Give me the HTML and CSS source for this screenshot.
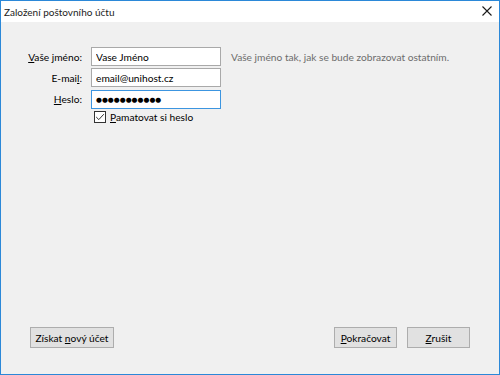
FILE: index.html
```html
<!DOCTYPE html>
<html lang="cs">
<head>
<meta charset="utf-8">
<link rel="stylesheet" href="styles.css">
</head>
<body>
<div class="window">
  <div class="titlebar">
    <span class="title">Založení poštovního účtu</span>
    <svg class="close" width="10" height="10" viewBox="0 0 10 10"><path d="M0.5 0.5 L9.5 9.5 M9.5 0.5 L0.5 9.5" stroke="#1a1a1a" stroke-width="1.1" fill="none"/></svg>
  </div>
  <div class="content">
    <div class="form">
      <label class="lbl"><u>V</u>aše jméno:</label>
      <input class="field" type="text" value="Vase Jméno">
      <span class="hint">Vaše jméno tak, jak se bude zobrazovat ostatním.</span>
      <label class="lbl">E-mai<u>l</u>:</label>
      <input class="field" type="text" value="email@unihost.cz">
      <span></span>
      <label class="lbl"><u>H</u>eslo:</label>
      <div class="field focus"><span class="dots">●●●●●●●●●●●</span></div>
      <span></span>
      <span></span>
      <div class="check">
        <svg class="box" width="12" height="12" viewBox="0 0 12 12"><rect x="0.5" y="0.5" width="11" height="11" fill="#fff" stroke="#333"/><path d="M2.2 6 L4.8 8.6 L9.8 3.2" stroke="#333" stroke-width="1" fill="none"/></svg>
        <span><u>P</u>amatovat si heslo</span>
      </div>
      <span></span>
    </div>
    <div class="buttons">
      <button class="btn new">Získat <u>n</u>ový účet</button>
      <div class="right">
        <button class="btn wide"><u>P</u>okračovat</button>
        <button class="btn wide"><u>Z</u>rušit</button>
      </div>
    </div>
  </div>
</div>
</body>
</html>
```
FILE: styles.css
```css
* { box-sizing: border-box; }
html, body { margin: 0; padding: 0; }
body {
  width: 500px;
  height: 375px;
  font-family: Lato, "Noto Sans", sans-serif;
  font-size: 10.2px;
  color: #000;
}
.window {
  width: 500px;
  height: 375px;
  border: 1px solid #2b88d8;
  display: flex;
  flex-direction: column;
  background: #f0f0f0;
}
.titlebar {
  height: 21px;
  background: #fff;
  display: flex;
  align-items: center;
  justify-content: space-between;
  padding: 0 7px 0 3px;
}
.title {
  font-size: 10px;
  color: #222;
}
.close { display: block; margin-top: -1px; }
.content {
  flex: 1;
  display: flex;
  flex-direction: column;
  justify-content: space-between;
  padding: 25px 0 26px 29px;
}
.form {
  display: grid;
  grid-template-columns: 52px 130px auto;
  column-gap: 9px;
  row-gap: 2px;
  align-items: center;
}
.lbl {
  text-align: right;
  white-space: nowrap;
  justify-self: end;
  color: #000;
}
.field {
  height: 19px;
  width: 130px;
  border: 1px solid #a9a9a9;
  background: #fff;
  font-family: inherit;
  font-size: 10.2px;
  padding: 0 4px;
  margin: 0;
  color: #000;
  outline: none;
  display: flex;
  align-items: center;
}
.field.focus {
  border-color: #3c95e0;
  margin-top: 1px;
}
.dots {
  font-size: 6.8px;
  letter-spacing: 0px;
  font-family: "DejaVu Sans", sans-serif;
}
.hint {
  color: #6d6d6d;
  margin-left: 1px;
  white-space: nowrap;
}
.check {
  display: flex;
  align-items: center;
  gap: 4px;
  padding-left: 3px;
  margin-top: 0;
}
.box { display: block; }
.buttons {
  display: flex;
  justify-content: space-between;
  padding-right: 29px;
}
.right { display: flex; gap: 10px; }
.btn {
  height: 21px;
  border: 1px solid #adadad;
  background: #e1e1e1;
  font-family: inherit;
  font-size: 10.2px;
  color: #000;
  padding: 0;
  margin: 0;
  white-space: nowrap;
}
.btn.new { width: 84px; }
.btn.wide { width: 63px; }
```
